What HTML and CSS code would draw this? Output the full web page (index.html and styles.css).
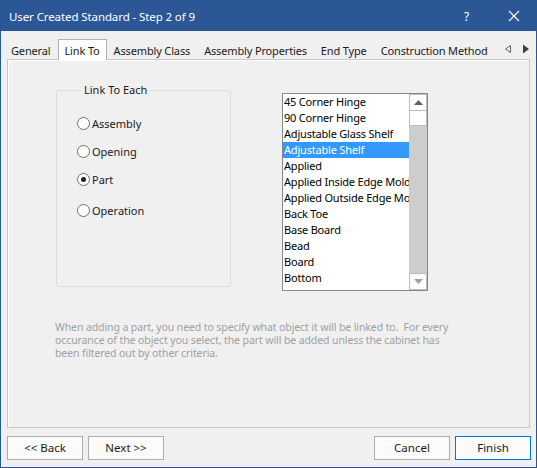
FILE: index.html
```html
<!DOCTYPE html>
<html>
<head>
<meta charset="utf-8">
<link rel="stylesheet" href="styles.css">
</head>
<body>
<div class="window">
  <div class="titlebar">
    <span class="title">User Created Standard - Step 2 of 9</span>
    <span class="help">?</span>
    <span class="close"><svg width="12" height="12" viewBox="0 0 12 12"><path d="M1 1L11 11M11 1L1 11" stroke="#fff" stroke-width="1.2" fill="none"/></svg></span>
  </div>
  <div class="tabs">
    <span class="tab">General</span>
    <span class="tab active">Link To</span>
    <span class="tab">Assembly Class</span>
    <span class="tab">Assembly Properties</span>
    <span class="tab">End Type</span>
    <span class="tab">Construction Method</span>
    <span class="tabarrows">
      <svg width="8" height="10" viewBox="0 0 8 10"><path d="M6.5 1.5V8.5L1.5 5Z" fill="none" stroke="#606060" stroke-width="1"/></svg>
      <svg width="8" height="10" viewBox="0 0 8 10"><path d="M1 0.5V9.5L7 5Z" fill="#404040"/></svg>
    </span>
  </div>
  <div class="panel">
    <div class="row">
      <fieldset class="group">
        <legend>Link To Each</legend>
        <label class="radio"><span class="dot"></span>Assembly</label>
        <label class="radio"><span class="dot"></span>Opening</label>
        <label class="radio"><span class="dot on"></span>Part</label>
        <label class="radio"><span class="dot"></span>Operation</label>
      </fieldset>
      <div class="listbox">
        <ul class="items">
          <li>45 Corner Hinge</li>
          <li>90 Corner Hinge</li>
          <li>Adjustable Glass Shelf</li>
          <li class="sel">Adjustable Shelf</li>
          <li>Applied</li>
          <li>Applied Inside Edge Molding</li>
          <li>Applied Outside Edge Molding</li>
          <li>Back Toe</li>
          <li>Base Board</li>
          <li>Bead</li>
          <li>Board</li>
          <li>Bottom</li>
        </ul>
        <div class="scroll">
          <div class="sbtn"><svg width="9" height="5" viewBox="0 0 9 5"><path d="M0 5L4.5 0L9 5Z" fill="#606060"/></svg></div>
          <div class="thumb"></div>
          <div class="track"></div>
          <div class="sbtn"><svg width="9" height="5" viewBox="0 0 9 5"><path d="M0 0L4.5 5L9 0Z" fill="#a0a0a0"/></svg></div>
        </div>
      </div>
    </div>
    <p class="note">When adding a part, you need to specify what object it will be linked to.&nbsp; For every<br>occurance of the object you select, the part will be added unless the cabinet has<br>been filtered out by other criteria.</p>
  </div>
  <div class="footer">
    <button class="btn">&lt;&lt; Back</button>
    <button class="btn">Next &gt;&gt;</button>
    <span class="spacer"></span>
    <button class="btn">Cancel</button>
    <button class="btn default">Finish</button>
  </div>
</div>
</body>
</html>
```

FILE: styles.css
```css
* { box-sizing: border-box; }
html, body { margin: 0; padding: 0; }
body {
  font-family: "Noto Sans", "Open Sans", sans-serif;
  font-size: 11px;
  color: #1a1a1a;
  background: #f0f0f0;
}
.window {
  width: 537px;
  height: 468px;
  border: 1px solid #2b5797;
  background: #f0f0f0;
  display: flex;
  flex-direction: column;
}
.titlebar {
  height: 30px;
  background: #2b5797;
  color: #fff;
  display: flex;
  align-items: center;
  padding-left: 8px;
  flex: none;
}
.title { font-size: 11.5px; flex: 1; letter-spacing: -0.1px; }
.help { width: 20px; margin-right: 24px; font-size: 12px; }
.close { width: 28px; display: flex; align-items: center; }
.tabs {
  display: flex;
  align-items: flex-end;
  height: 28px;
  padding-left: 3px;
  flex: none;
  position: relative;
  z-index: 1;
}
.tab {
  flex: none;
  height: 20px;
  line-height: 19px;
  padding: 0 6px;
  margin-bottom: -1px;
  border: 1px solid transparent;
  border-bottom: none;
  white-space: nowrap;
  font-size: 11px;
  letter-spacing: -0.15px;
}
.tab.active {
  background: #fff;
  border-color: #b0b0b0;
  height: 21px;
  padding-top: 1px;
}
.tabarrows {
  flex: none;
  display: flex;
  gap: 10px;
  margin-left: 9px;
  height: 20px;
  align-items: center;
}
.panel {
  flex: 1;
  margin: 0 6px;
  border: 1px solid #c8c8c8;
  box-shadow: inset 1px 1px 0 #fff;
  background: #f0f0f0;
  padding: 23px 0 0 48px;
}
.row { display: flex; align-items: flex-start; height: 214px; }
.group {
  margin: 0;
  width: 175px;
  height: 204px;
  border: 1px solid #dcdcdc;
  border-radius: 3px;
  padding: 12px 0 0 20px;
}
.group legend {
  padding: 0 3px;
  margin-left: 4px;
  font-size: 11px;
  line-height: 14px;
}
.radio {
  display: flex;
  align-items: center;
  height: 28px;
}
.radio:nth-of-type(4) { margin-top: 3px; }
.dot {
  width: 13px;
  height: 13px;
  border: 1px solid #707070;
  border-radius: 50%;
  background: #fff;
  margin-right: 2px;
  display: flex;
  align-items: center;
  justify-content: center;
}
.dot.on::after {
  content: "";
  width: 5px;
  height: 5px;
  border-radius: 50%;
  background: #222;
}
.listbox {
  margin: 10px 0 0 51px;
  width: 146px;
  height: 198px;
  border: 1px solid #828790;
  background: #fff;
  display: flex;
  overflow: hidden;
}
.items {
  list-style: none;
  margin: 0;
  padding: 0;
  flex: 1;
  overflow: hidden;
}
.items li {
  height: 16px;
  line-height: 16px;
  padding-left: 1px;
  white-space: nowrap;
  color: #000;
  letter-spacing: -0.2px;
}
.items li.sel { background: #3399ff; color: #fff; }
.scroll {
  width: 18px;
  display: flex;
  flex-direction: column;
  background: #cdcdcd;
  flex: none;
}
.sbtn {
  height: 17px;
  border: 1px solid #bcbcbc;
  background: #fdfdfd;
  display: flex;
  align-items: center;
  justify-content: center;
}
.thumb {
  height: 15px;
  border: 1px solid #bcbcbc;
  border-top: none;
  background: #fff;
}
.track { flex: 1; }
.note {
  margin: 24px 0 0 -1px;
  color: #a0a0a0;
  font-size: 10.5px;
  line-height: 13px;
  letter-spacing: -0.1px;
}
.footer {
  height: 39px;
  display: flex;
  align-items: center;
  padding: 0 5px 0 6px;
  gap: 5px;
  flex: none;
}
.spacer { flex: 1; }
.btn {
  width: 76px;
  height: 24px;
  border: 1px solid #adadad;
  background: #fbfbfb;
  font-family: inherit;
  font-size: 11.5px;
  color: #1a1a1a;
  padding: 0;
}
.btn.default { border-color: #0078d7; }
```
